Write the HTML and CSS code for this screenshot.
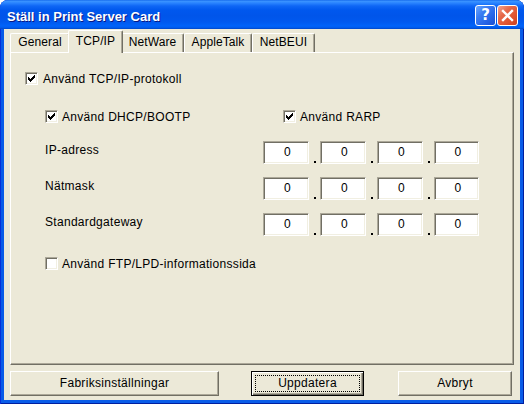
FILE: index.html
```html
<!DOCTYPE html>
<html lang="sv">
<head>
<meta charset="utf-8">
<title>Ställ in Print Server Card</title>
<link rel="stylesheet" href="styles.css">
</head>
<body>
<div class="window">
  <div class="titlebar">
    <div class="title">Ställ in Print Server Card</div>
    <div class="tb-buttons">
      <div class="tb-btn help">?</div>
      <div class="tb-btn close">
        <svg width="21" height="21" viewBox="0 0 21 21"><path d="M6 6 L15 15 M15 6 L6 15" stroke="#fff" stroke-width="2.4" stroke-linecap="square" fill="none"/></svg>
      </div>
    </div>
  </div>
  <div class="client">
    <div class="tabs">
      <div class="tab t-general">General</div>
      <div class="tab t-tcp active">TCP/IP</div>
      <div class="tab t-netware">NetWare</div>
      <div class="tab t-apple">AppleTalk</div>
      <div class="tab t-netbeui">NetBEUI</div>
    </div>
    <div class="panel">
      <div class="check">
        <span class="cb"><svg width="7" height="7" viewBox="0 0 7 7" shape-rendering="crispEdges"><path d="M6 0h1v1h-1zM5 1h2v1h-2zM0 2h1v1h-1zM4 2h3v1h-3zM0 3h2v1h-2zM3 3h3v1h-3zM0 4h5v1h-5zM1 5h3v1h-3zM2 6h1v1h-1z" fill="#000"/></svg></span>
        <span>Använd TCP/IP-protokoll</span>
      </div>
      <div class="group">
        <div class="opts">
          <div class="check">
            <span class="cb"><svg width="7" height="7" viewBox="0 0 7 7" shape-rendering="crispEdges"><path d="M6 0h1v1h-1zM5 1h2v1h-2zM0 2h1v1h-1zM4 2h3v1h-3zM0 3h2v1h-2zM3 3h3v1h-3zM0 4h5v1h-5zM1 5h3v1h-3zM2 6h1v1h-1z" fill="#000"/></svg></span>
            <span>Använd DHCP/BOOTP</span>
          </div>
          <div class="check">
            <span class="cb"><svg width="7" height="7" viewBox="0 0 7 7" shape-rendering="crispEdges"><path d="M6 0h1v1h-1zM5 1h2v1h-2zM0 2h1v1h-1zM4 2h3v1h-3zM0 3h2v1h-2zM3 3h3v1h-3zM0 4h5v1h-5zM1 5h3v1h-3zM2 6h1v1h-1z" fill="#000"/></svg></span>
            <span>Använd RARP</span>
          </div>
        </div>
        <div class="ipgrid">
          <div class="iplabel">IP-adress</div>
          <div class="ipfield">
            <div class="octet">0</div><div class="sep"></div>
            <div class="octet">0</div><div class="sep"></div>
            <div class="octet">0</div><div class="sep"></div>
            <div class="octet last">0</div>
          </div>
          <div class="iplabel">Nätmask</div>
          <div class="ipfield">
            <div class="octet">0</div><div class="sep"></div>
            <div class="octet">0</div><div class="sep"></div>
            <div class="octet">0</div><div class="sep"></div>
            <div class="octet last">0</div>
          </div>
          <div class="iplabel">Standardgateway</div>
          <div class="ipfield">
            <div class="octet">0</div><div class="sep"></div>
            <div class="octet">0</div><div class="sep"></div>
            <div class="octet">0</div><div class="sep"></div>
            <div class="octet last">0</div>
          </div>
        </div>
        <div class="check ftp">
          <span class="cb"></span>
          <span>Använd FTP/LPD-informationssida</span>
        </div>
      </div>
    </div>
    <div class="buttons">
      <div class="btn b-factory">Fabriksinställningar</div>
      <div class="btn b-update default">Uppdatera</div>
      <div class="btn b-cancel">Avbryt</div>
    </div>
  </div>
</div>
</body>
</html>
```
FILE: styles.css
```css
html, body {
  margin: 0;
  padding: 0;
  background: #ffffff;
}
body {
  width: 524px;
  height: 404px;
  overflow: hidden;
  font-family: "Liberation Sans", Arial, sans-serif;
  font-size: 12px;
  letter-spacing: 0.3px;
  color: #000;
}
.window {
  width: 524px;
  height: 404px;
  box-sizing: border-box;
  display: flex;
  flex-direction: column;
  background: #0a5ce8;
  border-radius: 8px 8px 0 0;
  overflow: hidden;
  box-shadow: inset 1px 0 #0831d9, inset -1px 0 #001ea0, inset 0 -1px #001ea0;
}
.titlebar {
  flex: none;
  height: 29px;
  box-sizing: border-box;
  padding: 5px 6px 0 7px;
  display: flex;
  align-items: flex-start;
  justify-content: space-between;
  background: linear-gradient(to bottom,
    #0a5fe8 0px, #3d95ff 1px, #2a84ff 3px, #0e66f5 6px, #0058ee 10px,
    #0055ea 16px, #0059ef 22px, #0063fa 26px, #0058e8 28px, #0043c0 29px);
}
.title {
  color: #fff;
  font-weight: bold;
  font-size: 13px;
  letter-spacing: 0;
  line-height: 21px;
  padding-top: 1px;
  text-shadow: 1px 1px #0a1883;
  white-space: nowrap;
}
.tb-buttons {
  display: flex;
  gap: 1px;
}
.tb-btn {
  width: 21px;
  height: 21px;
  box-sizing: border-box;
  border: 1px solid #fff;
  border-radius: 3px;
  display: flex;
  align-items: center;
  justify-content: center;
}
.tb-btn.help {
  background: linear-gradient(135deg, #6aa6ff 0%, #3a7cf2 35%, #2563e6 70%, #1c4fd0 100%);
  color: #fff;
  font-family: "DejaVu Sans", sans-serif;
  font-weight: bold;
  font-size: 15px;
  letter-spacing: 0;
  line-height: 19px;
}
.tb-btn.close {
  background: linear-gradient(135deg, #f2a48e 0%, #e6694a 35%, #e0532f 70%, #c9401f 100%);
}
.tb-btn.close svg {
  display: block;
  margin: -1px;
}
.client {
  flex: 1;
  margin: 0 4px 4px 4px;
  background: #ece9d8;
  display: flex;
  flex-direction: column;
  padding: 1px 6px 4px 6px;
}
.tabs {
  flex: none;
  height: 22px;
  display: flex;
  align-items: flex-end;
}
.tab {
  height: 19px;
  box-sizing: border-box;
  border-left: 1px solid #fff;
  border-top: 1px solid #fff;
  border-right: 1px solid #716f64;
  box-shadow: inset -1px 0 #aca899;
  border-radius: 2px 2px 0 0;
  text-align: center;
  line-height: 17px;
  white-space: nowrap;
  background: #ece9d8;
  letter-spacing: 0.1px;
}
.t-general { width: 60px; }
.t-tcp { width: 51px; }
.t-netware { width: 63px; }
.t-apple { width: 68px; }
.t-netbeui { width: 63px; }
.tab.active {
  height: 23px;
  width: 55px;
  margin: 0 -2px -1px -2px;
  padding-top: 2px;
  line-height: 17px;
  position: relative;
  z-index: 1;
}
.panel {
  flex: 1;
  box-sizing: border-box;
  border-top: 1px solid #fff;
  border-left: 1px solid #fff;
  border-right: 1px solid #716f64;
  border-bottom: 1px solid #716f64;
  box-shadow: inset -1px -1px #aca899;
  padding: 19px 0 0 14px;
}
.check {
  display: flex;
  align-items: center;
  height: 13px;
  gap: 5px;
  white-space: nowrap;
  line-height: 13px;
}
.check > span:last-child {
  padding-top: 1px;
}
.cb {
  flex: none;
  width: 13px;
  height: 13px;
  box-sizing: border-box;
  background: #fff;
  border-top: 1px solid #aca899;
  border-left: 1px solid #aca899;
  border-right: 1px solid #fff;
  border-bottom: 1px solid #fff;
  box-shadow: inset 1px 1px #716f64, inset -1px -1px #f1efe2;
  display: flex;
  align-items: center;
  justify-content: center;
}
.cb svg {
  display: block;
}
.group {
  margin-left: 20px;
}
.opts {
  margin-top: 25px;
  display: grid;
  grid-template-columns: 238px auto;
}
.opts .check {
  gap: 4px;
}
.ipgrid {
  margin-top: 18px;
  display: grid;
  grid-template-columns: 218px auto;
  row-gap: 13px;
}
.iplabel {
  line-height: 15px;
  padding-top: 2px;
}
.ipfield {
  display: flex;
  height: 23px;
}
.octet {
  width: 46px;
  height: 23px;
  box-sizing: border-box;
  background: #fff;
  border-top: 1px solid #aca899;
  border-left: 1px solid #aca899;
  border-right: 1px solid #fff;
  border-bottom: 1px solid #fff;
  box-shadow: inset 1px 1px #716f64, inset -1px -1px #f1efe2;
  text-align: center;
  line-height: 21px;
  padding-left: 3px;
}
.octet.last {
  width: 45px;
}
.sep {
  width: 11px;
  display: flex;
  align-items: flex-end;
  justify-content: center;
  padding-bottom: 1px;
  box-sizing: border-box;
}
.sep::before {
  content: "";
  width: 2px;
  height: 2px;
  background: #000;
}
.ftp {
  margin-top: 21px;
  gap: 4px;
}
.buttons {
  flex: none;
  margin-top: 6px;
  display: flex;
  height: 25px;
}
.btn {
  box-sizing: border-box;
  height: 25px;
  background: #ece9d8;
  border-top: 1px solid #fff;
  border-left: 1px solid #fff;
  border-right: 1px solid #716f64;
  border-bottom: 1px solid #716f64;
  box-shadow: inset -1px -1px #aca899;
  text-align: center;
  line-height: 23px;
  white-space: nowrap;
}
.b-factory { width: 209px; }
.b-update { width: 113px; margin-left: 32px; }
.b-cancel { width: 114px; margin-left: 34px; }
.btn.default {
  border: 1px solid #000;
  box-shadow: inset 1px 1px #fff, inset -1px -1px #716f64, inset -2px -2px #aca899;
  outline: 1px dotted #000;
  outline-offset: -5px;
}
```
